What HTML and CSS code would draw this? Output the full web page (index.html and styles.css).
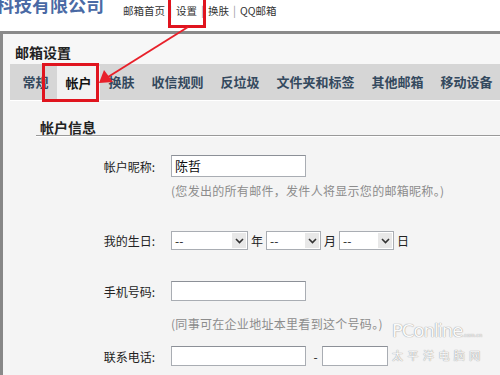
FILE: index.html
```html
<!DOCTYPE html>
<html>
<head>
	<title>邮箱设置</title>
	<link rel="stylesheet" href="styles.css">
</head>
<body>
	<div class="page">

		<div class="top">
			<div class="logo">科技有限公司</div>
			<div class="nav">
				<a>邮箱首页</a><i>|</i><a>设置</a><i>|</i><a>换肤</a><i>|</i><a>QQ邮箱</a>
			</div>
		</div>

		<div class="panel">
			<h2 class="title">邮箱设置</h2>
			<div class="tabs">
				<span class="tab first">常规</span>
				<span class="tab active">帐户</span>
				<span class="tab">换肤</span>
				<span class="tab">收信规则</span>
				<span class="tab">反垃圾</span>
				<span class="tab">文件夹和标签</span>
				<span class="tab">其他邮箱</span>
				<span class="tab">移动设备</span>
			</div>

			<div class="content">
				<h3 class="section">帐户信息</h3>

				<div class="row r1">
					<label>帐户昵称:</label>
					<div class="field"><span class="input wide">陈哲</span></div>
				</div>
				<div class="hint h1">(您发出的所有邮件，发件人将显示您的邮箱昵称。)</div>

				<div class="row r2">
					<label>我的生日:</label>
					<div class="field">
						<span class="sel year"><span>--</span><b><svg width="9" height="6" viewBox="0 0 9 6"><path d="M1 1 L4.5 4.5 L8 1" fill="none" stroke="#333" stroke-width="1.6"/></svg></b></span>
						<em>年</em>
						<span class="sel"><span>--</span><b><svg width="9" height="6" viewBox="0 0 9 6"><path d="M1 1 L4.5 4.5 L8 1" fill="none" stroke="#333" stroke-width="1.6"/></svg></b></span>
						<em>月</em>
						<span class="sel"><span>--</span><b><svg width="9" height="6" viewBox="0 0 9 6"><path d="M1 1 L4.5 4.5 L8 1" fill="none" stroke="#333" stroke-width="1.6"/></svg></b></span>
						<em>日</em>
					</div>
				</div>

				<div class="row r3">
					<label>手机号码:</label>
					<div class="field"><span class="input wide"></span></div>
				</div>
				<div class="hint h3">(同事可在企业地址本里看到这个号码。)</div>

				<div class="row r4">
					<label>联系电话:</label>
					<div class="field">
						<span class="input wide"></span>
						<span class="dash">-</span>
						<span class="input short"></span>
					</div>
				</div>
			</div>
		</div>

		<!-- annotation overlays -->
		<div class="mark mark-nav"></div>
		<div class="mark mark-tab"></div>
		<svg class="arrow" width="500" height="120" viewBox="0 0 500 120">
			<line x1="188" y1="27" x2="108" y2="77" stroke="#e8202a" stroke-width="2"/>
			<path d="M99 83 L104 70 L113 82 Z" fill="#e8202a"/>
		</svg>

		<div class="watermark">
			<div class="wm-big">PConline<small>.com.cn</small></div>
			<div class="wm-small">太 平 洋 电 脑 网</div>
		</div>
	</div>
</body>
</html>
```

FILE: styles.css
```css
body{
	margin: 0;
	font-family: "Noto Sans CJK SC", "Liberation Sans", sans-serif;
	font-size: 12px;
	color: #222;
}
.page{
	position: relative;
	width: 500px;
	height: 375px;
	overflow: hidden;
	background: #fff;
}
.top{
	height: 31px;
	display: flex;
	overflow: hidden;
}
.logo{
	width: 127px;
	margin-left: -4px;
	margin-top: -9px;
	font-size: 18px;
	font-weight: bold;
	color: #4a6aa5;
	white-space: nowrap;
}
.nav{
	padding-top: 1px;
	line-height: 18px;
	color: #333;
	white-space: nowrap;
}
.nav a{
	font-size: 10.5px;
}
.nav i{
	font-style: normal;
	color: #999;
	font-size: 11px;
	margin: 0 4px;
}

.panel{
	height: 400px;
	border-top: 3px solid #8a8a8a;
	border-left: 3px solid #8a8a8a;
	background: #f7f7f7;
	padding-left: 7px;
}
.title{
	margin: 0;
	padding: 6px 0 0 5px;
	height: 24px;
	line-height: 24px;
	font-size: 14px;
	font-weight: bold;
	color: #222;
}
.tabs{
	display: flex;
	height: 36px;
	background: #d6d6d6;
	padding-left: 4px;
}
.tab{
	padding: 0 8.5px;
	line-height: 36px;
	font-size: 13px;
	font-weight: bold;
	color: #34495e;
	white-space: nowrap;
}
.tab.active{
	background: #f2f2f2;
	color: #111;
	margin-top: 2px;
	line-height: 34px;
}

.content{
	height: 300px;
	background: #f4f4f4;
	padding-left: 26px;
	border-top: 1px solid #fff;
}
.section{
	margin: 0;
	padding: 18px 0 0 4px;
	height: 16px;
	line-height: 16px;
	font-size: 14px;
	font-weight: bold;
	color: #222;
	border-bottom: 1px solid #999;
	box-shadow: 0 1px 0 #fff;
}

.row{
	display: flex;
	align-items: center;
}
.row label{
	width: 119px;
	text-align: right;
	color: #222;
}
.field{
	margin-left: 16px;
	display: flex;
	align-items: center;
}
.r1{ margin-top: 19px; }
.r2{ margin-top: 32px; }
.r3{ margin-top: 31px; }
.r4{ margin-top: 14px; }

.input{
	display: block;
	box-sizing: border-box;
	height: 20px;
	background: #fff;
	border: 1px solid #a9adb3;
	border-top-color: #8c9097;
	line-height: 18px;
	padding-left: 3px;
	font-size: 13px;
	color: #111;
}
.r1 .input{ height: 22px; line-height: 20px; }
.input.wide{ width: 135px; }
.input.short{ width: 66px; }
.dash{
	width: 16px;
	padding-left: 3px;
	box-sizing: border-box;
	text-align: center;
}

.sel{
	box-sizing: border-box;
	width: 55px;
	height: 19px;
	display: flex;
	align-items: center;
	justify-content: space-between;
	background: #fff;
	border: 1px solid #a9adb3;
	padding-left: 3px;
}
.sel.year{ width: 77px; }
.sel b{
	width: 14px;
	height: 15px;
	margin-right: 1px;
	background: #e8e8e8;
	display: flex;
	align-items: center;
	justify-content: center;
}
.field em{
	font-style: normal;
	width: 18px;
	text-align: left;
	padding-left: 3px;
	box-sizing: border-box;
}

.hint{
	margin-left: 135px;
	line-height: 16px;
	color: #8c8c8c;
	letter-spacing: 0.3px;
}
.h1{ margin-top: 6px; }
.h3{ margin-top: 15px; }

.mark{
	position: absolute;
	border: 3px solid #e0141e;
	box-sizing: border-box;
}
.mark-nav{
	left: 168px;
	top: -3px;
	width: 38px;
	height: 31px;
}
.mark-tab{
	left: 42px;
	top: 63px;
	width: 57px;
	height: 39px;
}
.arrow{
	position: absolute;
	left: 0;
	top: 0;
}

.watermark{
	position: absolute;
	left: 392px;
	top: 318px;
	color: #fafafa;
	text-shadow: 0 0 1px #999, 0 0 1px #aaa;
}
.wm-big{
	font-family: "DejaVu Sans", sans-serif;
	font-size: 18px;
	letter-spacing: -1px;
	line-height: 26px;
}
.wm-big small{
	font-size: 5px;
	letter-spacing: 0;
}
.wm-small{
	font-size: 11px;
	line-height: 14px;
	letter-spacing: 1px;
}
```
